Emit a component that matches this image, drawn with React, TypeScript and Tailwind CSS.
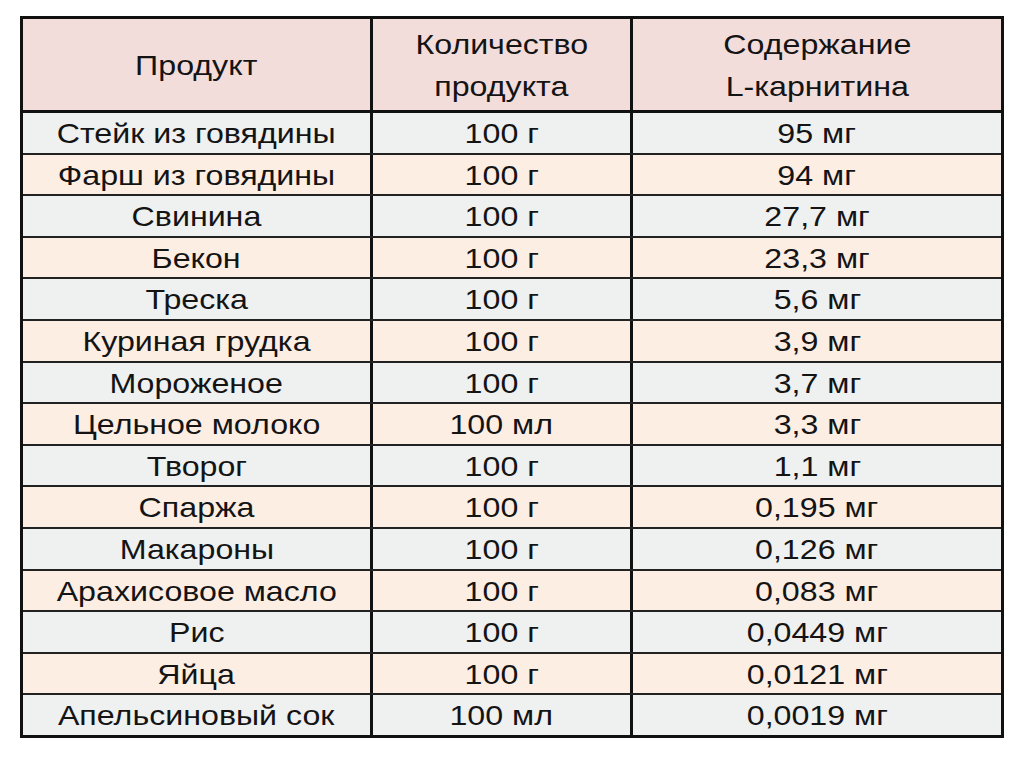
const rows: [string, string, string][] = [
  ["Стейк из говядины", "100 г", "95 мг"],
  ["Фарш из говядины", "100 г", "94 мг"],
  ["Свинина", "100 г", "27,7 мг"],
  ["Бекон", "100 г", "23,3 мг"],
  ["Треска", "100 г", "5,6 мг"],
  ["Куриная грудка", "100 г", "3,9 мг"],
  ["Мороженое", "100 г", "3,7 мг"],
  ["Цельное молоко", "100 мл", "3,3 мг"],
  ["Творог", "100 г", "1,1 мг"],
  ["Спаржа", "100 г", "0,195 мг"],
  ["Макароны", "100 г", "0,126 мг"],
  ["Арахисовое масло", "100 г", "0,083 мг"],
  ["Рис", "100 г", "0,0449 мг"],
  ["Яйца", "100 г", "0,0121 мг"],
  ["Апельсиновый сок", "100 мл", "0,0019 мг"],
]

// the picture's text is stretched sideways a little
const T = ({ children }: { children: string }) => (
  <span className="inline-block whitespace-nowrap scale-x-[1.17]">{children}</span>
)

const App = () => {
  return (
    <div className="w-[1024px] h-[758px] bg-white pt-[16px] pl-[20px] font-['Liberation_Sans',Arial,sans-serif] text-[27.5px] text-[#141414]">
      <div className="w-[984px] h-[722px] border-[3px] border-[#111] flex flex-col">
        <div className="h-[94px] flex border-b-[3px] border-[#111] bg-[#f2dddb] leading-[42px] text-center">
          <div className="w-[350px] border-r-[3px] border-[#111] flex items-center justify-center pt-[3px]">
            <T>Продукт</T>
          </div>
          <div className="w-[260px] border-r-[3px] border-[#111] flex flex-col items-center justify-center pt-[3px]">
            <T>Количество</T>
            <T>продукта</T>
          </div>
          <div className="flex-1 flex flex-col items-center justify-center pt-[3px]">
            <T>Содержание</T>
            <T>L-карнитина</T>
          </div>
        </div>
        <div className="flex-1 flex flex-col">
          {rows.map((r, i) => (
            <div
              key={i}
              className={
                "flex-1 flex text-center leading-none " +
                (i > 0 ? "border-t-2 border-[#222] " : "") +
                (i % 2 === 0 ? "bg-[#eff0f0]" : "bg-[#fdeee4]")
              }
            >
              <div className="w-[350px] border-r-[3px] border-[#111] flex items-center justify-center pt-[2px]">
                <T>{r[0]}</T>
              </div>
              <div className="w-[260px] border-r-[3px] border-[#111] flex items-center justify-center pt-[2px]">
                <T>{r[1]}</T>
              </div>
              <div className="flex-1 flex items-center justify-center pt-[2px]">
                <T>{r[2]}</T>
              </div>
            </div>
          ))}
        </div>
      </div>
    </div>
  )
}

export default App
